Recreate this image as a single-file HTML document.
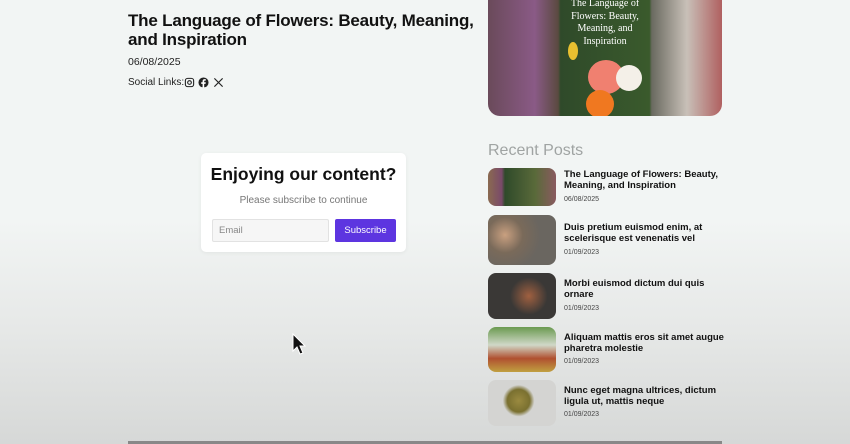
<!DOCTYPE html>
<html><head><meta charset="utf-8"><style>
*{margin:0;padding:0;box-sizing:border-box}
body{width:850px;height:444px;overflow:hidden;font-family:"Liberation Sans",sans-serif;background:linear-gradient(#f2f5f4 0,#f2f5f4 220px,#e6e8e7 330px,#d6d8d7 444px);position:relative}
.a{position:absolute}
h1{position:absolute;left:128px;top:11px;width:372px;font-size:17px;line-height:19px;font-weight:bold;color:#111;letter-spacing:-0.2px}
.date{left:128px;top:56px;font-size:10.5px;color:#222}
.soc{left:128px;top:77px;font-size:10px;color:#222}
.hero{left:488px;top:-10px;width:234px;height:126px;border-radius:0 0 12px 12px;overflow:hidden;background:linear-gradient(90deg,#6a4a5a,#8a5a86 20%,#5a4a40 30%,#2f4a2a 31%,#3a5a2c 69%,#6a6a60 70%,#c8c0b8 85%,#b06060)}
.hero .t{position:absolute;left:73px;top:8px;width:88px;text-align:center;font-family:"Liberation Serif",serif;color:#fff;font-size:10px;line-height:12.5px}
.card{left:201px;top:153px;width:205px;height:99px;background:#fff;border-radius:5px;box-shadow:0 1px 4px rgba(0,0,0,.06)}
.card .h{position:absolute;left:0;width:205px;top:11px;text-align:center;font-size:17.5px;font-weight:bold;color:#111}
.card .p{position:absolute;left:0;width:205px;top:42px;text-align:center;font-size:10px;color:#777}
.em{left:11px;top:66px;width:117px;height:23px;background:#f6f6f6;border:1px solid #e2e2e2;border-radius:2px;font-size:9.5px;color:#888;padding:5px 6px}
.btn{left:134px;top:66px;width:61px;height:23px;background:#5d35e0;border-radius:2px;color:#fff;font-size:9.5px;text-align:center;line-height:23px}
.rp{left:488px;top:142px;font-size:16px;color:#a0a4a3}
.th{position:absolute;left:488px;width:68px;border-radius:8px}
.pt{position:absolute;left:564px;width:160px;font-size:9.5px;line-height:10.5px;font-weight:bold;color:#111}
.pd{position:absolute;left:564px;font-size:7px;color:#444}
.bar{left:128px;top:441px;width:594px;height:3px;background:#888}
</style></head><body>
<h1>The Language of Flowers: Beauty, Meaning, and Inspiration</h1>
<div class="a date">06/08/2025</div>
<div class="a soc">Social Links:
<svg style="position:absolute;left:56px;top:0" width="11" height="11" viewBox="0 0 24 24" fill="none" stroke="#222" stroke-width="2.4"><rect x="3" y="3" width="18" height="18" rx="5"/><circle cx="12" cy="12" r="4"/></svg>
<svg style="position:absolute;left:70px;top:0" width="11" height="11" viewBox="0 0 24 24"><circle cx="12" cy="12" r="11" fill="#222"/><path d="M13.5 24V15h3l.5-3.5h-3.5V9.5c0-1 .4-1.7 1.8-1.7H17V4.7c-.4 0-1.5-.2-2.7-.2-2.6 0-4.3 1.6-4.3 4.4v2.6H7V15h3v9z" fill="#fff"/></svg>
<svg style="position:absolute;left:85px;top:0" width="11" height="11" viewBox="0 0 24 24" stroke="#222" stroke-width="2.6"><path d="M3 3l18 18M21 3L3 21"/></svg>
</div>
<div class="a hero"><div class="t">The Language of Flowers: Beauty, Meaning, and Inspiration</div>
<div class="a" style="left:100px;top:70px;width:36px;height:34px;border-radius:50%;background:#f08070"></div>
<div class="a" style="left:128px;top:75px;width:26px;height:26px;border-radius:50%;background:#f4f0e8"></div>
<div class="a" style="left:98px;top:100px;width:28px;height:28px;border-radius:50%;background:#f07820"></div>
<div class="a" style="left:80px;top:52px;width:10px;height:18px;border-radius:50%;background:#e8c030"></div>
</div>
<div class="a card"><div class="h">Enjoying our content?</div><div class="p">Please subscribe to continue</div>
<div class="a em">Email</div><div class="a btn">Subscribe</div></div>
<div class="a rp">Recent Posts</div>
<div class="th" style="top:168px;height:38px;background:linear-gradient(90deg,#8a6a50,#7a4a6a 20%,#2f4a2a 25%,#5a6a3a 70%,#8a5a60)"></div>
<div class="pt" style="top:170px">The Language of Flowers: Beauty, Meaning, and Inspiration</div><div class="pd" style="top:196px">06/08/2025</div>
<div class="th" style="top:215px;height:50px;background:radial-gradient(circle at 25% 40%,#c9a080 0,#7a6a5a 30%,#6a6660 60%),#6a6660"></div>
<div class="pt" style="top:223px">Duis pretium euismod enim, at scelerisque est venenatis vel</div><div class="pd" style="top:249px">01/09/2023</div>
<div class="th" style="top:273px;height:46px;background:radial-gradient(circle at 60% 50%,#a06040 0,#3a3836 40%),#2a2a2a"></div>
<div class="pt" style="top:279px">Morbi euismod dictum dui quis ornare</div><div class="pd" style="top:305px">01/09/2023</div>
<div class="th" style="top:327px;height:45px;background:linear-gradient(#6a9a50,#d0d8c8 40%,#b05030 70%,#c0a040)"></div>
<div class="pt" style="top:333px">Aliquam mattis eros sit amet augue pharetra molestie</div><div class="pd" style="top:358px">01/09/2023</div>
<div class="th" style="top:380px;height:46px;background:radial-gradient(circle at 45% 45%,#9a8a40 0,#7a7030 25%,#d4d4d2 35%),#d4d4d2"></div>
<div class="pt" style="top:386px">Nunc eget magna ultrices, dictum ligula ut, mattis neque</div><div class="pd" style="top:411px">01/09/2023</div>
<svg class="a" style="left:292px;top:333px" width="14" height="22" viewBox="0 0 14 22"><path d="M1 1v17l4-4 3 7 3-1-3-7h5z" fill="#111" stroke="#fff" stroke-width="1"/></svg>
<div class="a bar"></div>
</body></html>
